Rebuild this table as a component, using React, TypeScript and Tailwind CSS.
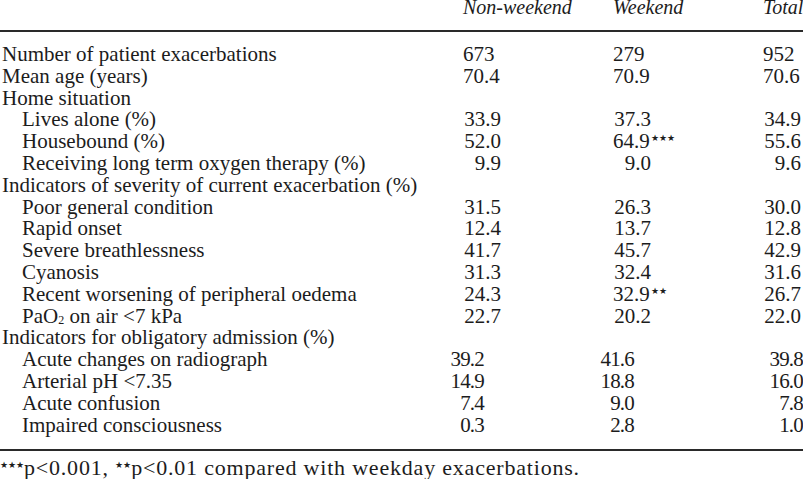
import React from "react";

type Row = {
  label: React.ReactNode;
  indent?: boolean;
  vals?: React.ReactNode[];
  mode?: "left" | "upper" | "lower";
};

const Stars = ({ n }: { n: number }) => (
  <span className="relative top-[-7px] text-[9px] ml-[1px]">{"★".repeat(n)}</span>
);

const rows: Row[] = [
  { label: "Number of patient exacerbations", vals: ["673", "279", "952"], mode: "left" },
  { label: "Mean age (years)", vals: ["70.4", "70.9", "70.6"], mode: "left" },
  { label: "Home situation" },
  { label: "Lives alone (%)", indent: true, vals: ["33.9", "37.3", "34.9"], mode: "upper" },
  {
    label: "Housebound (%)",
    indent: true,
    vals: [
      "52.0",
      <>
        64.9
        <Stars n={3} />
      </>,
      "55.6",
    ],
    mode: "upper",
  },
  { label: "Receiving long term oxygen therapy (%)", indent: true, vals: ["9.9", "9.0", "9.6"], mode: "upper" },
  { label: "Indicators of severity of current exacerbation (%)" },
  { label: "Poor general condition", indent: true, vals: ["31.5", "26.3", "30.0"], mode: "upper" },
  { label: "Rapid onset", indent: true, vals: ["12.4", "13.7", "12.8"], mode: "upper" },
  { label: "Severe breathlessness", indent: true, vals: ["41.7", "45.7", "42.9"], mode: "upper" },
  { label: "Cyanosis", indent: true, vals: ["31.3", "32.4", "31.6"], mode: "upper" },
  {
    label: "Recent worsening of peripheral oedema",
    indent: true,
    vals: [
      "24.3",
      <>
        32.9
        <Stars n={2} />
      </>,
      "26.7",
    ],
    mode: "upper",
  },
  {
    label: (
      <>
        PaO<sub className="text-[12px] relative top-[1px]">2</sub> on air &lt;7 kPa
      </>
    ),
    indent: true,
    vals: ["22.7", "20.2", "22.0"],
    mode: "upper",
  },
  { label: "Indicators for obligatory admission (%)" },
  { label: "Acute changes on radiograph", indent: true, vals: ["39.2", "41.6", "39.8"], mode: "lower" },
  { label: "Arterial pH <7.35", indent: true, vals: ["14.9", "18.8", "16.0"], mode: "lower" },
  { label: "Acute confusion", indent: true, vals: ["7.4", "9.0", "7.8"], mode: "lower" },
  { label: "Impaired consciousness", indent: true, vals: ["0.3", "2.8", "1.0"], mode: "lower" },
];

function Cell({ v, mode, idx }: { v: React.ReactNode; mode: Row["mode"]; idx: number }) {
  if (mode === "left") {
    return <div className="whitespace-nowrap">{v}</div>;
  }
  if (mode === "upper") {
    return (
      <div className="whitespace-nowrap">
        <span className="inline-block w-[38px] text-right whitespace-nowrap">{v}</span>
      </div>
    );
  }
  return (
    <div className="whitespace-nowrap">
      <span
        className={
          idx === 2
            ? "inline-block w-[40px] text-right tracking-[-0.8px]"
            : "inline-block w-[40px] ml-[-19px] text-right tracking-[-0.8px]"
        }
      >
        {v}
      </span>
    </div>
  );
}

export default function App() {
  return (
    <div className="w-[803px] h-[479px] overflow-hidden bg-white text-[#1c1c1c] font-['Liberation_Serif','Times_New_Roman',serif]">
      <div className="text-[21px] leading-[21.8px]">
        <div className="grid grid-cols-[463px_150px_150px_40px] pt-[1px] h-[13px] text-[20px] leading-[12px] italic whitespace-nowrap">
          <div></div>
          <div>Non-weekend</div>
          <div>Weekend</div>
          <div>Total</div>
        </div>
        <div className="mt-[17px] h-[1.5px] bg-[#2a2a2a]"></div>
        <div className="mt-[12.5px]">
          {rows.map((r, i) => (
            <div key={i} className="grid grid-cols-[463px_150px_150px_40px] h-[21.8px]">
              <div className={r.indent ? "pl-[22px] whitespace-nowrap" : "pl-[2px] whitespace-nowrap"}>
                {r.label}
              </div>
              {r.vals
                ? r.vals.map((v, j) => <Cell key={j} v={v} mode={r.mode} idx={j} />)
                : null}
            </div>
          ))}
        </div>
        <div className="mt-[12.6px] h-[2px] bg-[#2a2a2a]"></div>
        <div className="mt-[6px] text-[22px] leading-[22px] tracking-[0.8px] whitespace-nowrap">
          <span className="relative top-[-7px] text-[9px] tracking-[0px]">★★★</span>p&lt;0.001,{" "}
          <span className="relative top-[-7px] text-[9px] tracking-[0px]">★★</span>p&lt;0.01 compared with weekday exacerbations.
        </div>
      </div>
    </div>
  );
}
